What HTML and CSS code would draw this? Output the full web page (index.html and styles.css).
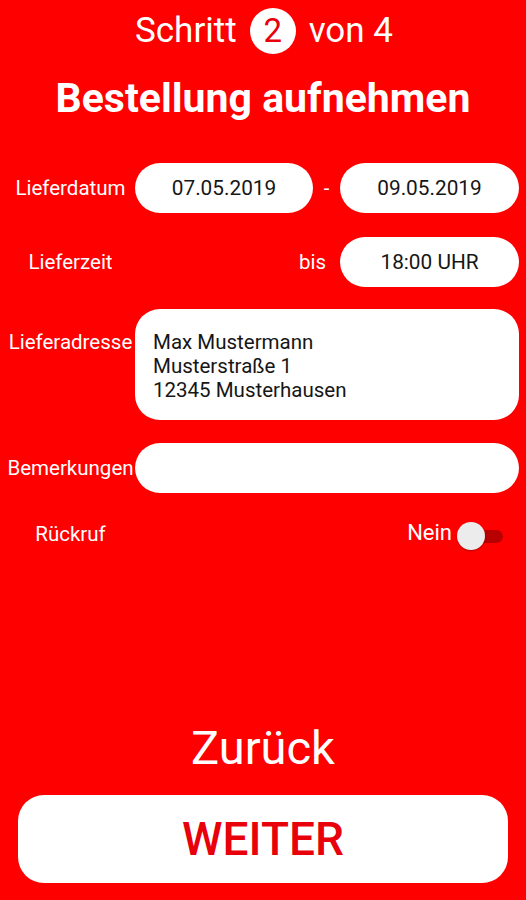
FILE: index.html
```html
<!DOCTYPE html>
<html lang="de">
<head>
<meta charset="utf-8">
<title>Bestellung aufnehmen</title>
<link rel="stylesheet" href="styles.css">
</head>
<body>
<div class="screen">
  <header class="header">
    <div class="step">
      <span>Schritt</span>
      <span class="step-num">2</span>
      <span>von 4</span>
    </div>
    <h1 class="title">Bestellung aufnehmen</h1>
  </header>

  <main class="form">
    <div class="row row-pill">
      <div class="label">Lieferdatum</div>
      <div class="pill pill-from">07.05.2019</div>
      <div class="dash">-</div>
      <div class="pill pill-to">09.05.2019</div>
    </div>
    <div class="row row-pill">
      <div class="label">Lieferzeit</div>
      <div class="spacer"></div>
      <div class="bis">bis</div>
      <div class="pill pill-to">18:00 UHR</div>
    </div>
    <div class="row row-top">
      <div class="label label-top">Lieferadresse</div>
      <div class="box address">Max Mustermann<br>Musterstraße 1<br>12345 Musterhausen</div>
    </div>
    <div class="row row-pill">
      <div class="label">Bemerkungen</div>
      <div class="box note"></div>
    </div>
    <div class="row row-toggle">
      <div class="label">Rückruf</div>
      <div class="spacer"></div>
      <div class="toggle-text">Nein</div>
      <div class="toggle"><span class="thumb"></span></div>
    </div>
  </main>

  <footer class="footer">
    <div class="back">Zurück</div>
    <div class="next">WEITER</div>
  </footer>
</div>
</body>
</html>
```

FILE: styles.css
```css
* { box-sizing: border-box; }

html, body {
  margin: 0;
  padding: 0;
  background: #ff0000;
}

body {
  font-family: Roboto, "Liberation Sans", Arial, sans-serif;
  color: #ffffff;
}

.screen {
  height: 900px;
  display: flex;
  flex-direction: column;
}

.header {
  padding-top: 8px;
  display: flex;
  flex-direction: column;
  align-items: center;
}

.step {
  height: 46px;
  display: flex;
  align-items: center;
  gap: 13px;
  font-size: 35px;
  line-height: 46px;
  margin-left: 2px;
}

.step-num {
  width: 46px;
  height: 46px;
  border-radius: 50%;
  background: #ffffff;
  color: #e8000b;
  display: flex;
  align-items: center;
  justify-content: center;
  font-size: 33px;
}

.title {
  margin: 20px 0 0;
  font-size: 41px;
  line-height: 48px;
  font-weight: 700;
  text-align: center;
}

.form {
  margin-top: 41px;
  padding-right: 7px;
  display: flex;
  flex-direction: column;
}

.row {
  display: flex;
  align-items: center;
}

.row-pill { height: 50px; }
.row-pill + .row-pill { margin-top: 24px; }
.row-top { margin-top: 22px; align-items: flex-start; }
.row-top + .row-pill { margin-top: 23px; }
.row-toggle { height: 30px; margin-top: 26px; padding-right: 16px; }

.label {
  width: 135px;
  flex: none;
  padding-left: 6px;
  text-align: center;
  font-size: 20.5px;
  line-height: 24px;
  white-space: nowrap;
}

.label-top { margin-top: 21px; }

.pill {
  height: 50px;
  border-radius: 25px;
  background: #ffffff;
  color: #161616;
  font-size: 20.8px;
  display: flex;
  align-items: center;
  justify-content: center;
}

.pill-from { width: 178px; flex: none; }
.pill-to { width: 179px; flex: none; }

.dash {
  flex: 1;
  text-align: center;
  font-size: 20px;
}

.spacer { flex: 1; }

.bis {
  font-size: 20.5px;
  margin-right: 14px;
}

.box {
  flex: 1;
  background: #ffffff;
  border-radius: 25px;
  color: #161616;
}

.address {
  height: 111px;
  padding: 21px 18px 0;
  font-size: 20.5px;
  line-height: 24px;
}

.note { height: 50px; }

.toggle-text {
  font-size: 22px;
  margin-right: 5px;
  margin-top: -4px;
}

.toggle {
  position: relative;
  width: 46px;
  height: 28px;
  margin-top: 4px;
}

.toggle::before {
  content: "";
  position: absolute;
  left: 12px;
  top: 8px;
  width: 34px;
  height: 13px;
  border-radius: 7px;
  background: #b80000;
}

.thumb {
  position: absolute;
  left: 0;
  top: 0;
  width: 28px;
  height: 28px;
  border-radius: 50%;
  background: #ececec;
  box-shadow: 0 1px 2px rgba(0, 0, 0, 0.3);
}

.footer {
  margin-top: auto;
  padding: 0 18px 17px;
  display: flex;
  flex-direction: column;
  align-items: stretch;
}

.back {
  text-align: center;
  font-size: 47px;
  line-height: 54px;
}

.next {
  margin-top: 20px;
  height: 88px;
  border-radius: 26px;
  background: #ffffff;
  color: #e8000b;
  font-size: 46px;
  font-weight: 500;
  display: flex;
  align-items: center;
  justify-content: center;
}
```
